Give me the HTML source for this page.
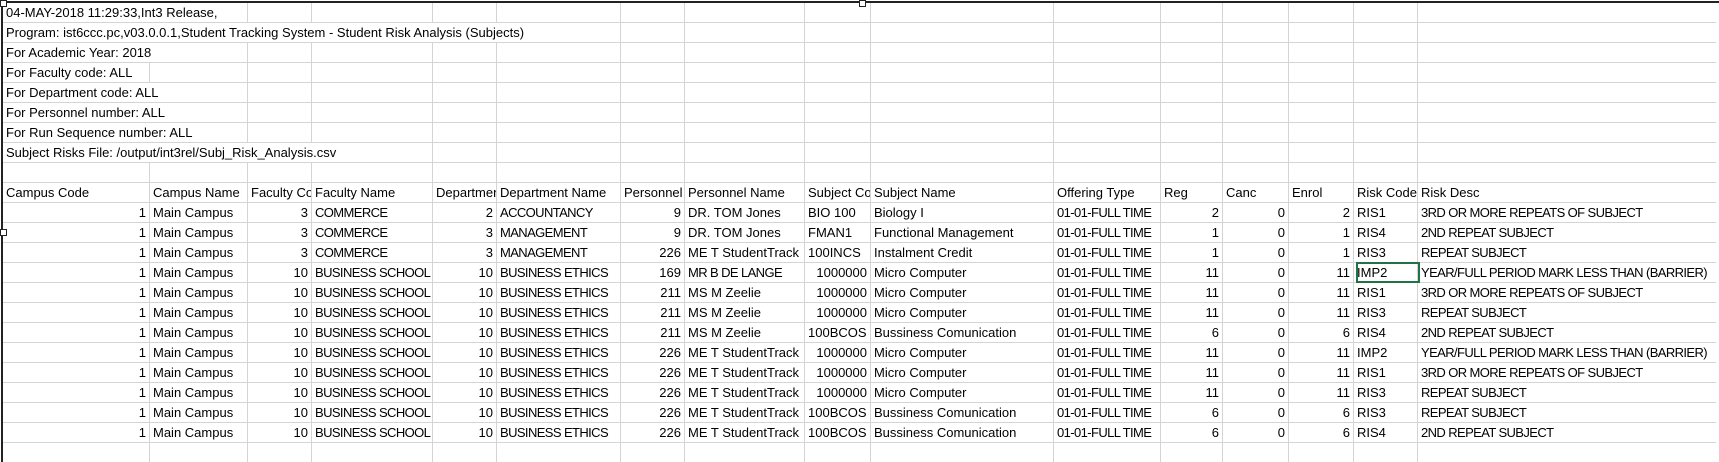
<!DOCTYPE html>
<html><head><meta charset="utf-8"><style>
html,body{margin:0;padding:0;background:#fff;width:1719px;height:462px;overflow:hidden}
body{font-family:"Liberation Sans",Arial,sans-serif;font-size:13px;color:#000;position:relative}
.sheet{position:absolute;left:3px;top:3px;width:1713px}
.r{display:grid;grid-template-columns:147px 98px 64px 121px 64px 124px 64px 120px 66px 183px 107px 62px 66px 65px 64px 298px;height:20px;overflow:hidden}
.r>div{box-sizing:border-box;border-right:1px solid #d4d4d4;border-bottom:1px solid #d4d4d4;height:20px;line-height:20px;padding:0 3px;white-space:nowrap;overflow:hidden}
.r>div:last-child{border-right:none}
.n{text-align:right}
.u{letter-spacing:-0.6px}
.s2{grid-column:span 2}.s4{grid-column:span 4}.s6{grid-column:span 6}
.top{position:absolute;left:0;top:1px;width:1719px;height:2px;background:#222}
.left{position:absolute;left:1px;top:1px;width:2px;height:462px;background:#222}
.h{position:absolute;width:5px;height:5px;border:1px solid #222;background:#fff}
.sel{position:absolute;left:1356px;top:262px;width:64px;height:21px;box-sizing:border-box;border:2px solid #217346}
</style></head><body>
<div class="sheet">
<div class="r"><div class="s2">04-MAY-2018 11:29:33,Int3 Release,</div><div></div><div></div><div></div><div></div><div></div><div></div><div></div><div></div><div></div><div></div><div></div><div></div><div></div><div></div></div>
<div class="r"><div class="s6">Program: ist6ccc.pc,v03.0.0.1,Student Tracking System - Student Risk Analysis (Subjects)</div><div></div><div></div><div></div><div></div><div></div><div></div><div></div><div></div><div></div><div></div></div>
<div class="r"><div class="s2">For Academic Year: 2018</div><div></div><div></div><div></div><div></div><div></div><div></div><div></div><div></div><div></div><div></div><div></div><div></div><div></div><div></div></div>
<div class="r"><div>For Faculty code: ALL</div><div></div><div></div><div></div><div></div><div></div><div></div><div></div><div></div><div></div><div></div><div></div><div></div><div></div><div></div><div></div></div>
<div class="r"><div class="s2">For Department code: ALL</div><div></div><div></div><div></div><div></div><div></div><div></div><div></div><div></div><div></div><div></div><div></div><div></div><div></div><div></div></div>
<div class="r"><div class="s2">For Personnel number: ALL</div><div></div><div></div><div></div><div></div><div></div><div></div><div></div><div></div><div></div><div></div><div></div><div></div><div></div><div></div></div>
<div class="r"><div class="s2">For Run Sequence number: ALL</div><div></div><div></div><div></div><div></div><div></div><div></div><div></div><div></div><div></div><div></div><div></div><div></div><div></div><div></div></div>
<div class="r"><div class="s4">Subject Risks File: /output/int3rel/Subj_Risk_Analysis.csv</div><div></div><div></div><div></div><div></div><div></div><div></div><div></div><div></div><div></div><div></div><div></div><div></div></div>
<div class="r"><div></div><div></div><div></div><div></div><div></div><div></div><div></div><div></div><div></div><div></div><div></div><div></div><div></div><div></div><div></div><div></div></div>
<div class="r"><div>Campus Code</div><div>Campus Name</div><div>Faculty Code</div><div>Faculty Name</div><div>Department</div><div>Department Name</div><div>Personnel</div><div>Personnel Name</div><div>Subject Code</div><div>Subject Name</div><div>Offering Type</div><div>Reg</div><div>Canc</div><div>Enrol</div><div>Risk Code</div><div>Risk Desc</div></div>

<div class="r"><div class="n">1</div><div>Main Campus</div><div class="n">3</div><div class="u">COMMERCE</div><div class="n">2</div><div class="u">ACCOUNTANCY</div><div class="n">9</div><div>DR. TOM Jones</div><div>BIO 100</div><div>Biology I</div><div class="u">01-01-FULL TIME</div><div class="n">2</div><div class="n">0</div><div class="n">2</div><div>RIS1</div><div class="u">3RD OR MORE REPEATS OF SUBJECT</div></div>
<div class="r"><div class="n">1</div><div>Main Campus</div><div class="n">3</div><div class="u">COMMERCE</div><div class="n">3</div><div class="u">MANAGEMENT</div><div class="n">9</div><div>DR. TOM Jones</div><div>FMAN1</div><div>Functional Management</div><div class="u">01-01-FULL TIME</div><div class="n">1</div><div class="n">0</div><div class="n">1</div><div>RIS4</div><div class="u">2ND REPEAT SUBJECT</div></div>
<div class="r"><div class="n">1</div><div>Main Campus</div><div class="n">3</div><div class="u">COMMERCE</div><div class="n">3</div><div class="u">MANAGEMENT</div><div class="n">226</div><div>ME T StudentTrack</div><div>100INCS</div><div>Instalment Credit</div><div class="u">01-01-FULL TIME</div><div class="n">1</div><div class="n">0</div><div class="n">1</div><div>RIS3</div><div class="u">REPEAT SUBJECT</div></div>
<div class="r"><div class="n">1</div><div>Main Campus</div><div class="n">10</div><div class="u">BUSINESS SCHOOL</div><div class="n">10</div><div class="u">BUSINESS ETHICS</div><div class="n">169</div><div class="u">MR B DE LANGE</div><div class="n">1000000</div><div>Micro Computer</div><div class="u">01-01-FULL TIME</div><div class="n">11</div><div class="n">0</div><div class="n">11</div><div>IMP2</div><div class="u">YEAR/FULL PERIOD MARK LESS THAN (BARRIER)</div></div>
<div class="r"><div class="n">1</div><div>Main Campus</div><div class="n">10</div><div class="u">BUSINESS SCHOOL</div><div class="n">10</div><div class="u">BUSINESS ETHICS</div><div class="n">211</div><div>MS M Zeelie</div><div class="n">1000000</div><div>Micro Computer</div><div class="u">01-01-FULL TIME</div><div class="n">11</div><div class="n">0</div><div class="n">11</div><div>RIS1</div><div class="u">3RD OR MORE REPEATS OF SUBJECT</div></div>
<div class="r"><div class="n">1</div><div>Main Campus</div><div class="n">10</div><div class="u">BUSINESS SCHOOL</div><div class="n">10</div><div class="u">BUSINESS ETHICS</div><div class="n">211</div><div>MS M Zeelie</div><div class="n">1000000</div><div>Micro Computer</div><div class="u">01-01-FULL TIME</div><div class="n">11</div><div class="n">0</div><div class="n">11</div><div>RIS3</div><div class="u">REPEAT SUBJECT</div></div>
<div class="r"><div class="n">1</div><div>Main Campus</div><div class="n">10</div><div class="u">BUSINESS SCHOOL</div><div class="n">10</div><div class="u">BUSINESS ETHICS</div><div class="n">211</div><div>MS M Zeelie</div><div>100BCOS</div><div>Bussiness Comunication</div><div class="u">01-01-FULL TIME</div><div class="n">6</div><div class="n">0</div><div class="n">6</div><div>RIS4</div><div class="u">2ND REPEAT SUBJECT</div></div>
<div class="r"><div class="n">1</div><div>Main Campus</div><div class="n">10</div><div class="u">BUSINESS SCHOOL</div><div class="n">10</div><div class="u">BUSINESS ETHICS</div><div class="n">226</div><div>ME T StudentTrack</div><div class="n">1000000</div><div>Micro Computer</div><div class="u">01-01-FULL TIME</div><div class="n">11</div><div class="n">0</div><div class="n">11</div><div>IMP2</div><div class="u">YEAR/FULL PERIOD MARK LESS THAN (BARRIER)</div></div>
<div class="r"><div class="n">1</div><div>Main Campus</div><div class="n">10</div><div class="u">BUSINESS SCHOOL</div><div class="n">10</div><div class="u">BUSINESS ETHICS</div><div class="n">226</div><div>ME T StudentTrack</div><div class="n">1000000</div><div>Micro Computer</div><div class="u">01-01-FULL TIME</div><div class="n">11</div><div class="n">0</div><div class="n">11</div><div>RIS1</div><div class="u">3RD OR MORE REPEATS OF SUBJECT</div></div>
<div class="r"><div class="n">1</div><div>Main Campus</div><div class="n">10</div><div class="u">BUSINESS SCHOOL</div><div class="n">10</div><div class="u">BUSINESS ETHICS</div><div class="n">226</div><div>ME T StudentTrack</div><div class="n">1000000</div><div>Micro Computer</div><div class="u">01-01-FULL TIME</div><div class="n">11</div><div class="n">0</div><div class="n">11</div><div>RIS3</div><div class="u">REPEAT SUBJECT</div></div>
<div class="r"><div class="n">1</div><div>Main Campus</div><div class="n">10</div><div class="u">BUSINESS SCHOOL</div><div class="n">10</div><div class="u">BUSINESS ETHICS</div><div class="n">226</div><div>ME T StudentTrack</div><div>100BCOS</div><div>Bussiness Comunication</div><div class="u">01-01-FULL TIME</div><div class="n">6</div><div class="n">0</div><div class="n">6</div><div>RIS3</div><div class="u">REPEAT SUBJECT</div></div>
<div class="r"><div class="n">1</div><div>Main Campus</div><div class="n">10</div><div class="u">BUSINESS SCHOOL</div><div class="n">10</div><div class="u">BUSINESS ETHICS</div><div class="n">226</div><div>ME T StudentTrack</div><div>100BCOS</div><div>Bussiness Comunication</div><div class="u">01-01-FULL TIME</div><div class="n">6</div><div class="n">0</div><div class="n">6</div><div>RIS4</div><div class="u">2ND REPEAT SUBJECT</div></div>
<div class="r"><div></div><div></div><div></div><div></div><div></div><div></div><div></div><div></div><div></div><div></div><div></div><div></div><div></div><div></div><div></div><div></div></div>
</div>
<div class="top"></div>
<div class="left"></div>
<div class="h" style="left:0;top:0"></div>
<div class="h" style="left:859px;top:0"></div>
<div class="h" style="left:0;top:229px"></div>
<div class="sel"></div>
</body></html>
